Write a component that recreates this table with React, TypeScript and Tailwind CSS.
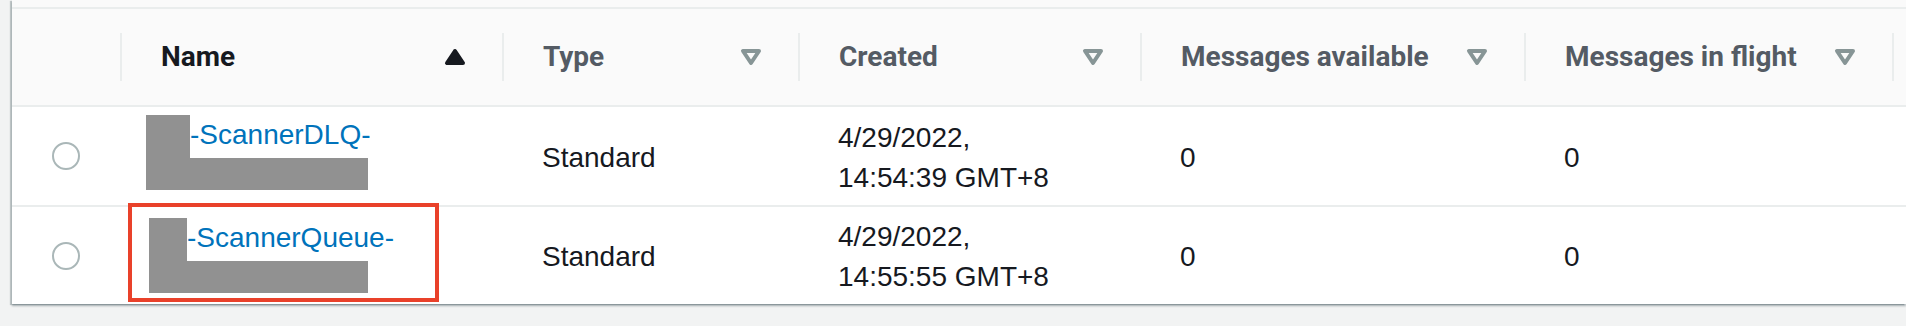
import React from 'react'

const cols = [
  { label: 'Name', w: 'w-[382px]', sorted: true },
  { label: 'Type', w: 'w-[296px]' },
  { label: 'Created', w: 'w-[342px]' },
  { label: 'Messages available', w: 'w-[384px]' },
  { label: 'Messages in flight', w: 'w-[368px]' },
]

function SortIcon({ active }: { active?: boolean }) {
  if (active) {
    return (
      <svg width="32" height="32" viewBox="0 0 16 16" className="shrink-0">
        <path d="M4 11h8L8 5l-4 6z" fill="#16191f" stroke="#16191f" strokeWidth="2" strokeLinejoin="round" />
      </svg>
    )
  }
  return (
    <svg width="32" height="32" viewBox="0 0 16 16" className="shrink-0">
      <path d="M4 5h8l-4 6-4-6z" fill="none" stroke="#879596" strokeWidth="2" strokeLinejoin="round" />
    </svg>
  )
}

function Radio() {
  return <div className="w-[28px] h-[28px] rounded-full border-2 border-[#aab7b8] bg-white" />
}

function Row({ name, pl, pt, boxW, boxH, wideW, date, time, mark }: {
  name: string; pl: string; pt: string; boxW: string; boxH: string; wideW: string
  date: string; time: string; mark?: boolean
}) {
  return (
    <div className="flex h-full">
      <div className="w-[108px] flex items-center justify-center">
        <Radio />
      </div>
      <div className={`relative w-[382px] flex flex-col items-start ${pl} ${pt}`}>
        <div className="flex items-start">
          <div className={`${boxW} ${boxH} bg-[#919191]`} />
          <a className="text-[#0073bb] leading-[40px] whitespace-nowrap">{name}</a>
        </div>
        <div className={`${wideW} h-[32px] bg-[#919191]`} />
        {mark && (
          <div className="absolute left-[8px] top-[-4px] w-[311px] h-[99px] border-4 border-[#e9412a]" />
        )}
      </div>
      <div className="w-[296px] flex items-center pl-[40px] pt-[3px]">Standard</div>
      <div className="w-[342px] flex flex-col justify-center pl-[40px] pt-[3px]">
        <div>{date}</div>
        <div>{time}</div>
      </div>
      <div className="w-[384px] flex items-center pl-[40px] pt-[3px]">0</div>
      <div className="w-[368px] flex items-center pl-[40px] pt-[3px]">0</div>
      <div className="flex-1" />
    </div>
  )
}

export default function App() {
  return (
    <div className="w-[1906px] h-[326px] bg-[#f2f3f3] pl-[12px] overflow-hidden font-['Liberation_Sans',Arial,sans-serif] text-[28px] leading-[40px] text-[#16191f]">
      <div className="h-[304px] bg-white flex flex-col shadow-[0_2px_2px_0_rgba(0,28,36,0.3),-2px_1px_1px_0_rgba(0,28,36,0.2)]">
        <div className="h-[7px] bg-[#fafafa] border-b-2 border-[#eaeded] box-content" />
        <div className="h-[96px] bg-[#fafafa] flex border-b-2 border-[#eaeded] box-content">
          <div className="w-[108px]" />
          {cols.map((c) => (
            <div key={c.label} className={`${c.w} flex items-center`}>
              <div className="w-[2px] h-[48px] bg-[#eaeded]" />
              <div className="flex flex-1 items-center justify-between pl-[39px] pr-[31px]">
                <span className={`font-['Roboto',sans-serif] font-bold whitespace-nowrap ${c.sorted ? 'text-[#16191f]' : 'text-[#545b64]'}`}>{c.label}</span>
                <SortIcon active={c.sorted} />
              </div>
            </div>
          ))}
          <div className="flex-1 flex items-center">
            <div className="w-[2px] h-[48px] bg-[#eaeded]" />
          </div>
        </div>
        <div className="h-[98px] border-b-2 border-[#eaeded] box-content">
          <Row name="-ScannerDLQ-" pl="pl-[26px]" pt="pt-[8px]" boxW="w-[44px]" boxH="h-[43px]" wideW="w-[222px]"
            date="4/29/2022," time="14:54:39 GMT+8" />
        </div>
        <div className="h-[97px]">
          <Row name="-ScannerQueue-" pl="pl-[29px]" pt="pt-[11px]" boxW="w-[38px]" boxH="h-[43px]" wideW="w-[219px]"
            date="4/29/2022," time="14:55:55 GMT+8" mark />
        </div>
      </div>
    </div>
  )
}
